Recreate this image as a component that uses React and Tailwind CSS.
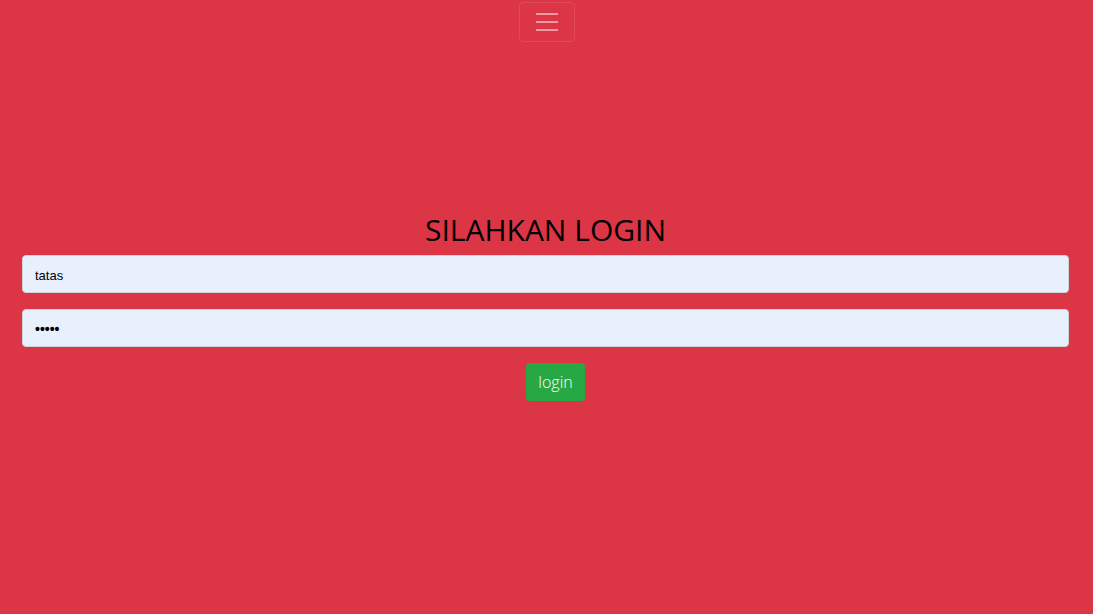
import React, { useState } from "react";

const App = () => {
  const [username, setUsername] = useState("tatas");
  const [password, setPassword] = useState("tatas");

  return (
    <div className="min-h-screen w-full bg-[#dc3545]" style={{ fontFamily: '"Open Sans", "Noto Sans", sans-serif' }}>
      <nav className="flex justify-center pt-[2px]">
        <button className="flex h-[40px] w-[56px] items-center justify-center rounded-[4px] border border-white/10">
          <svg width="30" height="30" viewBox="0 0 30 30">
            <path d="M4 7h22M4 15h22M4 23h22" stroke="rgba(255,255,255,0.5)" strokeWidth="2" strokeLinecap="butt" />
          </svg>
        </button>
      </nav>

      <div className="pl-[22px] pr-[24px] pt-[168px]">
        <h3 className="mb-[5px] text-center text-[30px] leading-[40px] text-black">SILAHKAN LOGIN</h3>
        <form className="flex flex-col items-center" onSubmit={(e) => e.preventDefault()}>
          <input
            type="text"
            value={username}
            onChange={(e) => setUsername(e.target.value)}
            className="mb-[16px] h-[38px] w-full rounded-[4px] border border-[#ced4da] bg-[#e8f0fe] px-[12px] pt-[2px] text-[13px] text-black outline-none"
            style={{ fontFamily: '"Liberation Sans", Arial, sans-serif' }}
          />
          <input
            type="password"
            value={password}
            onChange={(e) => setPassword(e.target.value)}
            className="mb-[16px] h-[38px] w-full rounded-[4px] border border-[#ced4da] bg-[#e8f0fe] px-[12px] pt-[2px] text-[14px] font-bold text-black outline-none"
            style={{ fontFamily: '"Liberation Sans", Arial, sans-serif' }}
          />
          <button type="submit" className="ml-[20px] h-[38px] rounded-[4px] bg-[#28a745] px-[12px] text-[16px] font-light text-white">
            login
          </button>
        </form>
      </div>
    </div>
  );
};

export default App;
